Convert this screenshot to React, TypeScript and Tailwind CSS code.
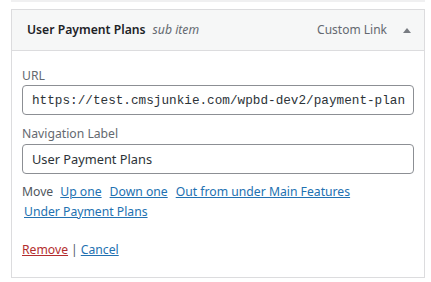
import React from "react";

export default function App() {
  const sans = { fontFamily: '"Noto Sans", "Open Sans", sans-serif' };
  return (
    <div className="w-[431px] h-[282px] bg-white overflow-hidden" style={sans}>
      <div className="ml-[11px] mr-[6px] h-[2px] bg-[#f0f0f1]" />
      <div className="ml-[11px] mr-[6px] mt-[7px] border border-[#dcdcde]">
        <div className="h-[41px] bg-[#f6f7f7] border-b border-[#dcdcde] flex items-center pl-[15px] pr-[13px]">
          <span className="text-[12.2px] font-semibold text-[#1d2327]">User Payment Plans</span>
          <span className="ml-[7px] text-[12.2px] italic text-[#646970]">sub item</span>
          <span className="ml-auto text-[12px] text-[#646970]">Custom Link</span>
          <svg className="ml-[16px]" width="8" height="5" viewBox="0 0 8 5">
            <path d="M4 0 L8 5 L0 5 Z" fill="#787c82" />
          </svg>
        </div>
        <div className="pl-[10px] pr-[10px] pt-[16px] pb-[17px] text-[12.2px]">
          <div className="leading-[18px] text-[#646970]">URL</div>
          <input
            readOnly
            value="https://test.cmsjunkie.com/wpbd-dev2/payment-plans/"
            className="block w-full h-[30px] border border-[#8c8f94] rounded-[4px] pl-[9px] pr-[8px] text-[12.7px] text-[#2c3338] outline-none"
            style={{ fontFamily: '"Liberation Mono", monospace' }}
          />
          <div className="mt-[10px] leading-[18px] text-[#646970]">Navigation Label</div>
          <input
            readOnly
            value="User Payment Plans"
            className="block mt-[1px] w-full h-[30px] border border-[#8c8f94] rounded-[4px] pl-[9px] pr-[8px] text-[12.8px] text-[#2c3338] outline-none"
            style={sans}
          />
          <div className="mt-[8px] flex flex-wrap leading-[20px] text-[#50575e]">
            <span className="mr-[5px]">Move</span>
            <a className="ml-[2px] mr-[6px] text-[#2271b1] underline">Up one</a>
            <a className="ml-[2px] mr-[6px] text-[#2271b1] underline">Down one</a>
            <a className="ml-[2px] mr-[6px] text-[#2271b1] underline">Out from under Main Features</a>
            <a className="ml-[2px] mr-[6px] text-[#2271b1] underline">Under Payment Plans</a>
          </div>
          <div className="mt-[18px] leading-[20px] text-[#50575e]">
            <a className="text-[#b32d2e] underline">Remove</a>
            <span className="mx-[3px]">|</span>
            <a className="text-[#2271b1] underline">Cancel</a>
          </div>
        </div>
      </div>
    </div>
  );
}
